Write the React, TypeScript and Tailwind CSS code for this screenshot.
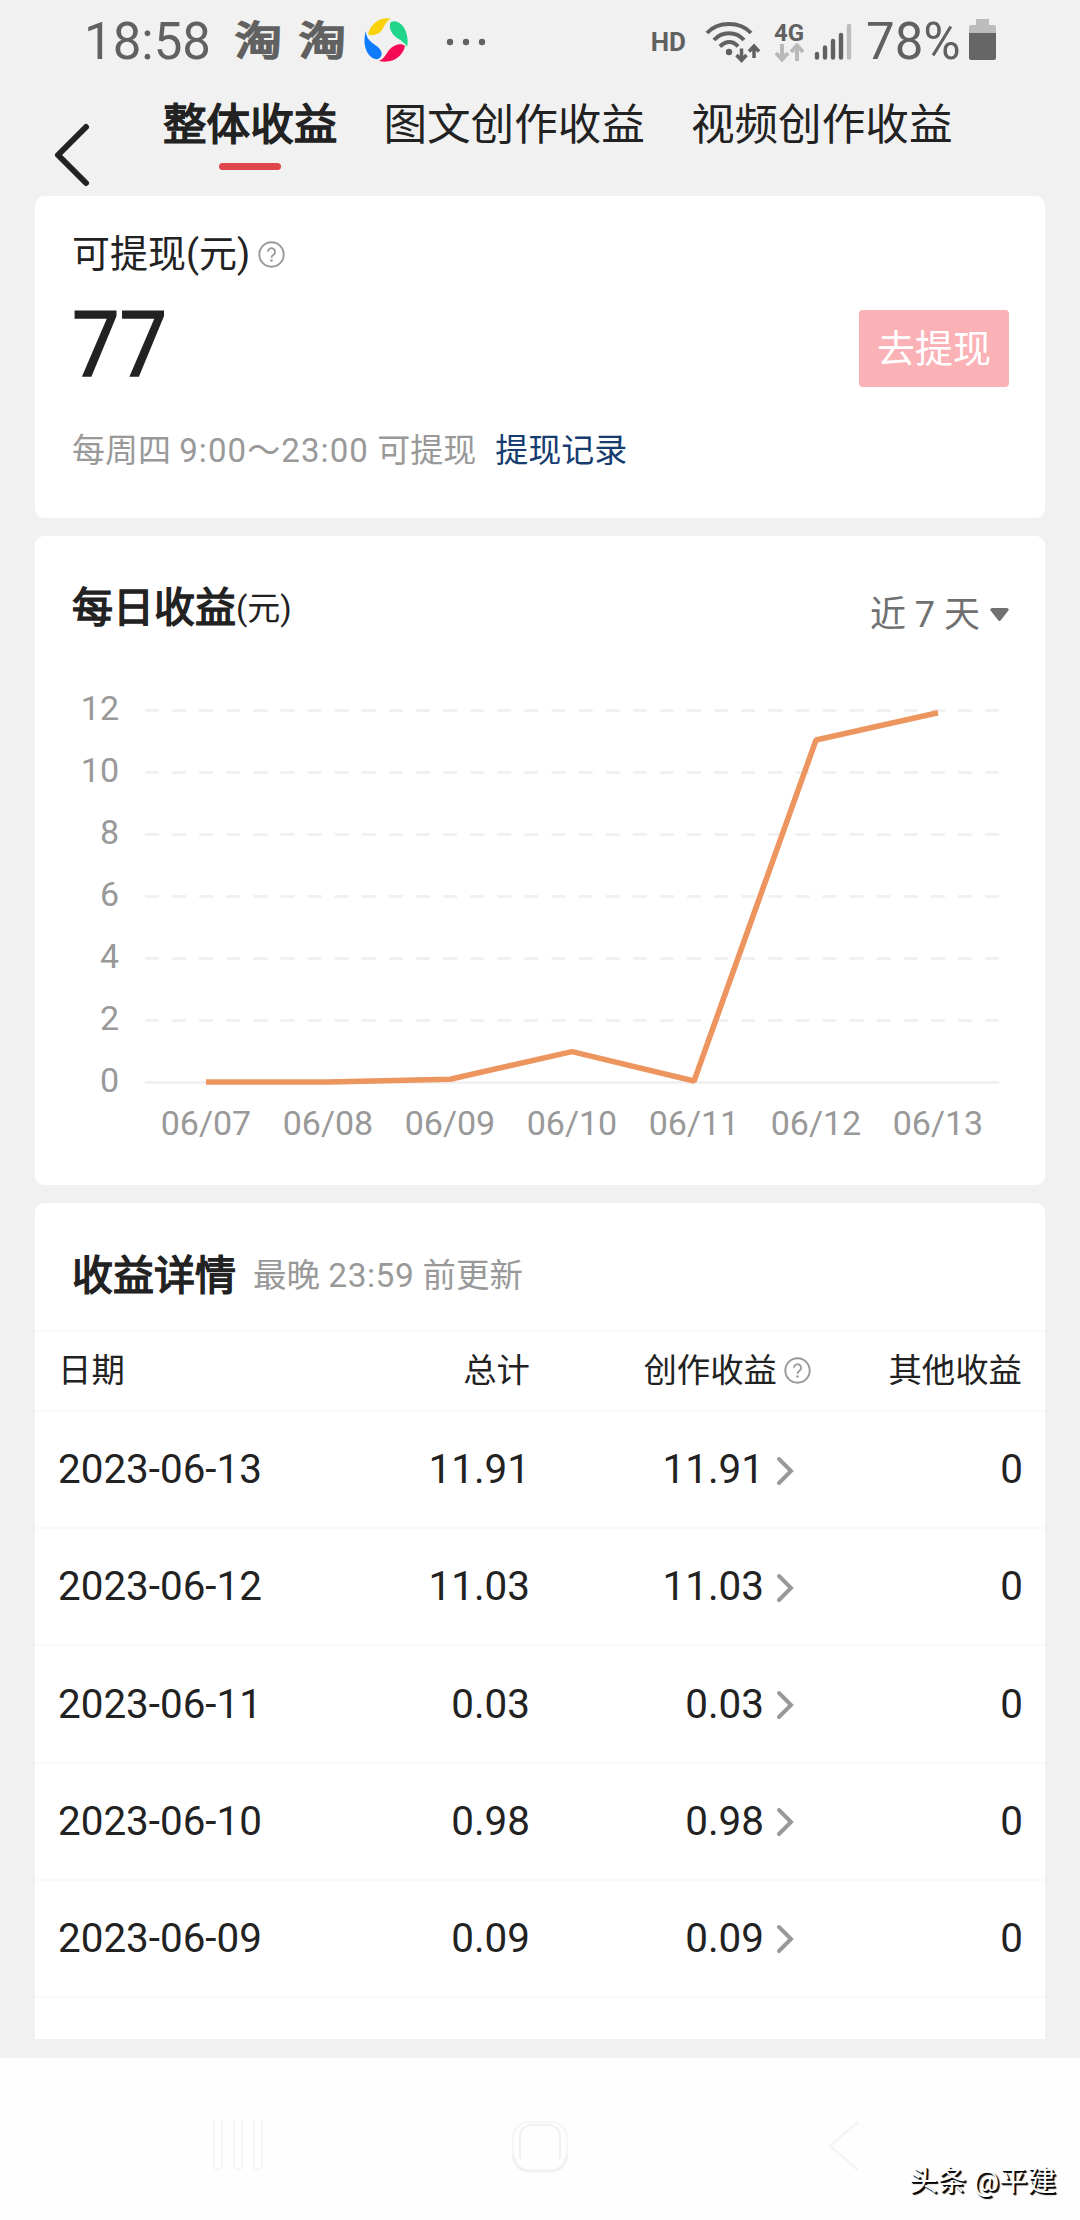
import React from "react";

interface Earning {
  date: string;
  total: string;
  creation: string;
  other: string;
}

interface Point {
  day: string;
  y: number;
}

const earnings: Earning[] = [
  { date: "2023-06-13", total: "11.91", creation: "11.91", other: "0" },
  { date: "2023-06-12", total: "11.03", creation: "11.03", other: "0" },
  { date: "2023-06-11", total: "0.03", creation: "0.03", other: "0" },
  { date: "2023-06-10", total: "0.98", creation: "0.98", other: "0" },
  { date: "2023-06-09", total: "0.09", creation: "0.09", other: "0" },
];

const points: Point[] = [
  { day: "06/07", y: 0 },
  { day: "06/08", y: 0 },
  { day: "06/09", y: 0.09 },
  { day: "06/10", y: 0.98 },
  { day: "06/11", y: 0.03 },
  { day: "06/12", y: 11.03 },
  { day: "06/13", y: 11.91 },
];

function HelpIcon() {
  return (
    <svg width="27" height="27" viewBox="0 0 27 27" fill="none" stroke="#999999">
      <circle cx="13.5" cy="13.5" r="12.2" strokeWidth="1.9" />
      <path d="M9.900 10.800a3.600 3.600 0 1 1 5.600 3c-1.300.9-2 1.400-2 2.900" strokeWidth="1.8" />
      <circle cx="13.5" cy="19.5" r="1.3" fill="#999999" stroke="none" />
    </svg>
  );
}

function StatusBar() {
  return (
    <div className="flex h-[84px] items-center pl-[84px] pr-[83px] text-[#616161]">
      <span className="w-[151px] text-[51px] leading-[84px]">18:58</span>
      <span className="w-[64px] scale-y-[0.84] text-[47px] leading-[80px] [-webkit-text-stroke:2.6px_#616161]">淘</span>
      <span className="w-[64px] scale-y-[0.84] text-[47px] leading-[80px] [-webkit-text-stroke:2.6px_#616161]">淘</span>
      <svg className="-mt-1" width="46" height="48" viewBox="0 0 46 48">
        <path d="M5 18C8 6 20 0 28 3c-5 2-6 6-9 11-4 6-13 6-14 4z" fill="#fbd20a" />
        <path d="M28 6c6-3 13 3 15 10 2 6 2 11 1 15-2-4-5-6-10-9-6-4-9-12-6-16z" fill="#1fd58a" />
        <path d="M42 30c-2 10-12 18-26 15 5-2 7-7 10-11 5-6 13-7 16-4z" fill="#f50a55" />
        <path d="M3 15C-1 27 3 40 12 43c5 1 8-4 6-8C15 28 3 27 3 15z" fill="#0f7bff" />
      </svg>
      <svg className="ml-9" width="42" height="10" viewBox="0 0 42 10" fill="#616161">
        <circle cx="5" cy="5" r="3.2" />
        <circle cx="21" cy="5" r="3.2" />
        <circle cx="37" cy="5" r="3.2" />
      </svg>

      <span className="ml-auto text-[26px] font-bold leading-[80px]">HD</span>
      <svg className="ml-[19px]" width="56" height="46" viewBox="0 0 56 46" fill="none" stroke="#616161" strokeWidth="4">
        <path d="M2 14C13 2 35 2 46 14" />
        <path d="M9 21C17 12 31 12 39 21" />
        <path d="M15 27.500C21 21.500 28 21.500 33 27.500" />
        <circle cx="24" cy="33" r="3.200" fill="#616161" stroke="none" />
        <path d="M36.500 29.500v11M31.500 36l5 5.500 5-5.500M49 39V28M44 32.500l5-5.500 5 5.500" strokeWidth="3.500" />
      </svg>
      <div className="ml-[13px] flex w-[32px] flex-col">
        <span className="h-[22px] text-[24px] font-bold leading-[24px]">4G</span>
        <svg width="32" height="20" viewBox="0 0 32 20" fill="none" stroke="#b9b9b9" strokeWidth="4">
          <path d="M8 1v15M2 10l6 6.500 6-6.500M23 18V4M17 9l6-6.500L29 9" />
        </svg>
      </div>
      <svg className="ml-[8px]" width="38" height="38" viewBox="0 0 38 38" stroke="#616161" strokeWidth="4.400" strokeLinecap="round">
        <path d="M3 31v3.500M11 24.500v10M19 18v16.500M27 12v22.500" />
        <path d="M35 3v31.500" stroke="#bcbcbc" />
      </svg>
      <span className="ml-[14px] w-[103px] text-[51px] leading-[84px]">78%</span>
      <svg className="-mt-1" width="28" height="42" viewBox="0 0 28 42">
        <path d="M7 0h13v6h5q2 0 2 2v7H0V8q0-2 2-2h5z" fill="#bcbcbc" />
        <path d="M0 14h27v25q0 2-2 2H2q-2 0-2-2z" fill="#666666" />
      </svg>
    </div>
  );
}

function Tabs() {
  return (
    <nav className="flex h-[112px] pl-[52px]">
      <svg className="mt-[37px]" width="40" height="68" viewBox="0 0 40 68" fill="none" stroke="#222222" strokeWidth="6" strokeLinecap="round" strokeLinejoin="round">
        <path d="M34 6L6 34l28 28" />
      </svg>
      <div className="ml-[71px] flex gap-[46px] pt-[3px] text-[43.6px] leading-[78px]">
        <div className="flex flex-col items-center">
          <span className="[-webkit-text-stroke:1.6px_#222]">整体收益</span>
          <span className="-mt-[2px] h-[7px] w-[62px] rounded-full bg-[#e0474a]" />
        </div>
        <span>图文创作收益</span>
        <span>视频创作收益</span>
      </div>
    </nav>
  );
}

function Balance() {
  return (
    <section className="h-[322px] rounded-[9px] bg-white pl-[37px] pr-9">
      <div className="flex h-[114px] items-center gap-[8px] pt-[3px] text-[38px]">
        <span>可提现(元)</span>
        <HelpIcon />
      </div>
      <div className="flex h-[77px] items-center justify-between">
        <span className="-mt-[6px] origin-left scale-x-[0.93] text-[91px] leading-[77px] [-webkit-text-stroke:1.4px_#222]">77</span>
        <button className="h-[77px] w-[150px] rounded-[4px] bg-[#fab2b6] pt-[1px] text-[38px] text-white">去提现</button>
      </div>
      <p className="mt-[44px] text-[33px] leading-[40px] text-[#999999]">
        每周四 <span className="tracking-[1.1px]">9:00～23:00</span> 可提现
        <a className="ml-[19px] text-[#173c70]">提现记录</a>
      </p>
    </section>
  );
}

function DailyChart() {
  const ticks = [12, 10, 8, 6, 4, 2, 0];
  const toX = (i: number) => 171 + i * 122;
  const toY = (v: number) => 546 - v * 31;
  const line = points.map((p, i) => `${toX(i)},${toY(p.y)}`).join(" ");

  return (
    <section className="h-[649px] rounded-[9px] bg-white">
      <div className="flex h-[120px] items-center justify-between pl-[37px] pr-9">
        <h2 className="flex items-center pt-[26px] text-[41px]">
          <span className="[-webkit-text-stroke:1.5px_#222]">每日收益</span>
          <span className="text-[33px]">(元)</span>
        </h2>
        <div className="flex items-center gap-[10px] pt-[37px] text-[36px] text-[#707070]">
          近 7 天
          <svg width="19" height="14" viewBox="0 0 19 14" fill="#707070">
            <path d="M2 0h15q3 1 1 3l-7 9q-1.500 2-3 0L1 3Q-1 1 2 0z" />
          </svg>
        </div>
      </div>
      <svg className="block" width="1010" height="529" viewBox="0 120 1010 529">
        {ticks.map((t) => (
          <g key={t}>
            <path
              d={`M110 ${toY(t) + 0.5}H964`}
              stroke="#f1f1f1"
              strokeWidth="3"
              strokeDasharray={t === 0 ? undefined : "14 13.1"}
            />
            <text x="84" y={toY(t) + 10} textAnchor="end" fontSize="34" fill="#999999">
              {t}
            </text>
          </g>
        ))}
        {points.map((p, i) => (
          <text key={p.day} x={toX(i)} y="599" textAnchor="middle" fontSize="34" fill="#999999">
            {p.day}
          </text>
        ))}
        <polyline points={line} fill="none" stroke="#ec955f" strokeWidth="5.600" strokeLinejoin="bevel" />
      </svg>
    </section>
  );
}

function Details() {
  return (
    <section className="h-[836px] rounded-t-[9px] bg-white">
      <div className="flex h-[129px] items-center border-b-2 border-[#f8f8f8] pl-[37px] pt-[20px]">
        <h2 className="text-[41px] [-webkit-text-stroke:1.5px_#222]">收益详情</h2>
        <span className="ml-[17px] text-[33.5px] text-[#999999]">
          最晚 <span className="tracking-[0.5px]">23:59</span> 前更新
        </span>
      </div>
      <div className="grid h-[80px] grid-cols-[250px_244px_269px_1fr] items-center border-b-2 border-[#f8f8f8] pl-[23px] pr-[23px] text-[33.4px]">
        <span>日期</span>
        <span className="pr-[22px] text-right">总计</span>
        <span className="flex items-center justify-end gap-[7px] pr-[10px]">
          创作收益
          <HelpIcon />
        </span>
        <span className="text-right">其他收益</span>
      </div>
      {earnings.map((e) => (
        <div
          key={e.date}
          className="grid h-[117.2px] grid-cols-[250px_244px_269px_1fr] items-center border-b-2 border-[#f8f8f8] pl-[23px] pr-[22px] pt-[2px] text-[40.4px]"
        >
          <span>{e.date}</span>
          <span className="pr-[22px] text-right">{e.total}</span>
          <span className="flex items-center justify-end gap-[12px] pr-[26px]">
            {e.creation}
            <svg width="19" height="30" viewBox="0 0 19 30" fill="none" stroke="#999999" strokeWidth="4" strokeLinecap="round">
              <path d="M3 3l12 12L3 27" />
            </svg>
          </span>
          <span className="text-right">{e.other}</span>
        </div>
      ))}
    </section>
  );
}

function NavBar() {
  return (
    <footer className="relative flex h-[162px] items-center bg-[#fefefe] pl-[208px]">
      <svg className="mt-4" width="60" height="56" viewBox="0 0 60 56" fill="none" stroke="#f5f5f5" strokeWidth="2">
        <path d="M6 2v46q4 6 8 0V2M26 2v46q4 6 8 0V2M46 2v46q4 6 8 0V2" />
      </svg>
      <svg className="ml-[243px] mt-4" width="58" height="56" viewBox="0 0 58 56" fill="none" stroke="#f1f1f1" strokeWidth="2">
        <rect x="2" y="3" width="54" height="49" rx="16" stroke="#f6f6f6" />
        <path d="M2 36c2 12 8 16 17 16h20c9 0 15-4 17-16" strokeWidth="3" />
        <path d="M9 40V19Q9 6 21 6h16q12 0 12 13v21" />
      </svg>
      <svg className="ml-[257px] mt-4" width="36" height="56" viewBox="0 0 36 56" fill="none" stroke="#f4f4f4" strokeWidth="2.500">
        <path d="M32 3L4 27l28 24" />
      </svg>
      <span className="absolute right-[24px] top-[106px] text-[28.5px] leading-[36px] text-white [text-shadow:1px_1px_0_#000,2px_2px_1px_#000]">
        头条 @平建
      </span>
    </footer>
  );
}

export default function App() {
  return (
    <div className="h-[2220px] w-[1080px] overflow-hidden bg-[#f1f1f1] font-[Roboto,'Noto_Sans_CJK_SC',sans-serif] text-[#222222]">
      <StatusBar />
      <Tabs />
      <main className="flex h-[1862px] flex-col gap-[18px] px-[35px]">
        <Balance />
        <DailyChart />
        <Details />
      </main>
      <NavBar />
    </div>
  );
}
